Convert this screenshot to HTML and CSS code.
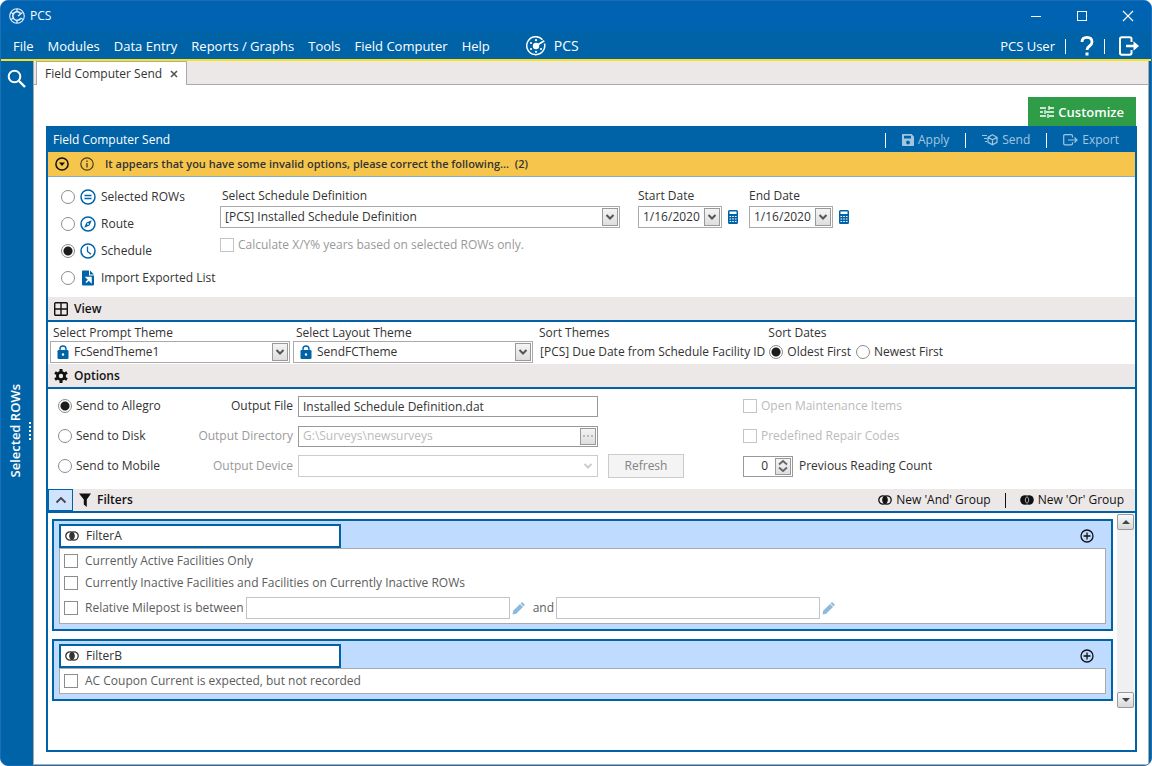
FILE: index.html
```html
<!DOCTYPE html>
<html lang="en">
<head>
    <meta charset="UTF-8">
    <meta name="viewport" content="width=device-width, initial-scale=1.0">
    <title>PCS</title>
    <link rel="stylesheet" href="styles.css">
</head>
<body>
    <svg class="sprite" aria-hidden="true">
        <symbol id="chevron-down" viewBox="0 0 10 8"><path d="M1.5 2L5 5.5 8.5 2" fill="none" stroke="currentColor" stroke-width="2"/></symbol>
        <symbol id="calc" viewBox="0 0 12 14"><rect x="1" width="10" height="14" rx="1.5" fill="#0063a7"/><path d="M2.5 1.5h7V4h-7z" fill="#fff"/><path d="M2.5 6.5h7M2.5 9h7M2.5 11.5h7" stroke="#fff" stroke-width="1.2" stroke-dasharray="1.6 1.1"/></symbol>
        <symbol id="lock" viewBox="0 0 12 14"><rect x="0.5" y="5" width="11" height="9" rx="1.2" fill="#0063a7"/><path d="M3 5.5V4a3 3 0 0 1 6 0v1.5" fill="none" stroke="#0063a7" stroke-width="1.4"/><circle cx="6" cy="9.5" r="1.2" fill="#fff"/></symbol>
        <symbol id="and" viewBox="0 0 14 10"><circle cx="5" cy="5" r="4.2" fill="none" stroke="currentColor" stroke-width="1.3"/><circle cx="9" cy="5" r="4.2" fill="none" stroke="currentColor" stroke-width="1.3"/><path d="M7 1.3a4.2 4.2 0 0 1 0 7.400a4.2 4.2 0 0 1 0-7.400z" fill="currentColor"/></symbol>
        <symbol id="or" viewBox="0 0 14 10"><circle cx="5" cy="5" r="4.8" fill="currentColor"/><circle cx="9" cy="5" r="4.8" fill="currentColor"/><path d="M7 1.6a4.2 4.2 0 0 1 0 6.8a4.2 4.2 0 0 1 0-6.8z" fill="none" stroke="#ece8e8" stroke-width="0.7"/></symbol>
        <symbol id="plus" viewBox="0 0 14 14"><circle cx="7" cy="7" r="6" fill="none" stroke="#111" stroke-width="1.3"/><path d="M7 3.5v7M3.5 7h7" stroke="#111" stroke-width="1.3"/></symbol>
        <symbol id="pencil" viewBox="0 0 13 13"><path d="M0.5 12.5l0.7-3.7L8 2l3 3-6.800 6.800zM8.600 1.400l0.800-.8q.7-.6 1.300 0l1.700 1.700q.6.600 0 1.300l-.8.800z" fill="#8cb9dc"/></symbol>
        <symbol id="exit" viewBox="0 0 20 20"><path d="M12.5 6V3q0-1.800-1.800-1.800H2.800Q1 1.200 1 3v14q0 1.800 1.800 1.800h7.900q1.800 0 1.800-1.800v-3" fill="none" stroke="currentColor" stroke-width="2"/><path d="M7 10h9" stroke="currentColor" stroke-width="2.4"/><path d="M14.5 5.2L20 10l-5.5 4.800z" fill="currentColor"/></symbol>
    </svg>

    <div class="window">
        <header class="title-bar">
            <svg class="title-logo" viewBox="0 0 16 16"><circle cx="8" cy="8" r="7.300" fill="none" stroke="#e3eef8" stroke-width="1.1"/><path d="M11.600 10.500A4.300 4.300 0 1 1 11.500 5.400" fill="none" stroke="#e3eef8" stroke-width="1.600"/><path d="M8 1v3M8 12v3M2 4.500l2.500 1.500M2 11.500L4.500 10M14 11.500L11.500 10M9 8l4.500-3.500" stroke="#e3eef8" stroke-width="1.4"/></svg>
            <span class="grow">PCS</span>
            <button class="window-button" aria-label="Minimize"><svg viewBox="0 0 12 12"><path d="M1 6.5h10" stroke="#fff"/></svg></button>
            <button class="window-button" aria-label="Maximize"><svg viewBox="0 0 12 12"><rect x="1.5" y="1.5" width="9" height="9" fill="none" stroke="#fff"/></svg></button>
            <button class="window-button" aria-label="Close"><svg viewBox="0 0 12 12"><path d="M1 1l10 10M11 1L1 11" stroke="#fff" stroke-width="1.2"/></svg></button>
        </header>

        <nav class="menu-bar">
            <a href="#">File</a>
            <a href="#">Modules</a>
            <a href="#">Data Entry</a>
            <a href="#">Reports / Graphs</a>
            <a href="#">Tools</a>
            <a href="#">Field Computer</a>
            <a href="#">Help</a>
            <a href="#" class="brand">
                <svg width="20" height="20" viewBox="0 0 20 20"><path d="M18.500 7.500A9 9 0 1 1 16.500 3.700" fill="none" stroke="#fff" stroke-width="1.5"/><circle cx="10" cy="10" r="3.2" fill="#fff"/><path d="M11 9.300L18.300 4.800" stroke="#fff" stroke-width="1.7"/><g fill="#fff"><circle cx="10" cy="4.200" r="1.1"/><circle cx="5" cy="7" r="1.1"/><circle cx="5" cy="13" r="1.1"/><circle cx="10" cy="15.800" r="1.1"/><circle cx="15" cy="13" r="1.1"/></g></svg>
                PCS
            </a>
            <span class="grow"></span>
            <a href="#">PCS User</a>
            <span class="divider"></span>
            <button class="menu-icon" aria-label="Help"><svg width="14" height="20" viewBox="0 0 14 20"><path d="M2 6q0-4.600 5-4.600T12 6q0 2.200-2.500 4T7 14" fill="none" stroke="#fff" stroke-width="2.800"/><rect x="5.500" y="16.500" width="3" height="3" fill="#fff"/></svg></button>
            <span class="divider"></span>
            <button class="menu-icon" aria-label="Sign out"><svg width="20" height="20"><use href="#exit"/></svg></button>
        </nav>

        <div class="workspace">
            <aside class="sidebar">
                <button class="search" aria-label="Search"><svg width="20" height="20" viewBox="0 0 20 20"><circle cx="7.500" cy="7.500" r="5.800" fill="none" stroke="#fff" stroke-width="2"/><path d="M12 12l6 6" stroke="#fff" stroke-width="2.4"/></svg></button>
                <div class="side-tab"><span>Selected ROWs</span><i class="grip"></i></div>
            </aside>

            <div class="content">
                <div class="tabs">
                    <div class="tab">Field Computer Send
                        <button class="tab-close" aria-label="Close tab"><svg width="8" height="8" viewBox="0 0 8 8"><path d="M1 1l6 6M7 1L1 7" stroke="#555" stroke-width="1.6"/></svg></button>
                    </div>
                </div>

                <main class="page">
                    <button class="customize"><svg width="14" height="12" viewBox="0 0 14 12"><path d="M0 2h6M9 2h5M9 0v4M0 6h3M6 6h8M5 4v4M0 10h6M9 10h5M8 8v4" stroke="#fff" stroke-width="1.3"/></svg>Customize</button>

                    <section class="panel">
                        <div class="panel-header">
                            <h1>Field Computer Send</h1>
                            <span class="divider"></span>
                            <button disabled><svg width="12" height="12" viewBox="0 0 12 12"><path d="M1 0h8.500L12 2.500V11q0 1-1 1H1q-1 0-1-1V1q0-1 1-1z" fill="currentColor"/><path d="M2 1.700h7V4.500H2z" fill="#0063a7"/><circle cx="6" cy="8.500" r="1.900" fill="#0063a7"/></svg>Apply</button>
                            <span class="divider"></span>
                            <button disabled><svg width="16" height="12" viewBox="0 0 16 12"><path d="M0 1.500h5M2 4.500h3M3 7.500h2" stroke="currentColor" stroke-width="1.2"/><path d="M10.500 0.800L15 3.300v5l-4.500 2.500L6 8.300v-5zM6 3.300l4.500 2.500L15 3.300M10.500 5.800v5" fill="none" stroke="currentColor" stroke-width="1.2"/></svg>Send</button>
                            <span class="divider"></span>
                            <button disabled><svg width="15" height="12" viewBox="0 0 15 12"><path d="M9.500 3.500V2q0-1.300-1.300-1.300H2Q.7.700.7 2v7.500q0 1.300 1.300 1.300h6.200q1.300 0 1.300-1.300V8.300M5 6h9M11.500 3.500L14 6l-2.500 2.500" fill="none" stroke="currentColor" stroke-width="1.2"/></svg>Export</button>
                        </div>

                        <div class="warning">
                            <svg width="14" height="14" viewBox="0 0 14 14"><circle cx="7" cy="7" r="6.100" fill="none" stroke="#111" stroke-width="1.5"/><path d="M4 5.500h6L7 9z" fill="#111"/></svg>
                            <svg width="14" height="14" viewBox="0 0 14 14"><circle cx="7" cy="7" r="6.200" fill="none" stroke="#4a3d1a" stroke-width="1.2"/><path d="M7 6v4.500M7 3.500v1.400" stroke="#4a3d1a" stroke-width="1.3"/></svg>
                            <strong>It appears that you have some invalid options, please correct the following... &nbsp;(2)</strong>
                        </div>

                        <div class="source">
                            <div class="source-list">
                                <label><input type="radio" name="source"><svg width="16" height="16" viewBox="0 0 16 16"><circle cx="8" cy="8" r="7" fill="none" stroke="#0063a7" stroke-width="1.5"/><path d="M4.500 6.500h7M4.500 9.500h7" stroke="#0063a7" stroke-width="1.4"/></svg>Selected ROWs</label>
                                <label><input type="radio" name="source"><svg width="16" height="16" viewBox="0 0 16 16"><circle cx="8" cy="8" r="7" fill="none" stroke="#0063a7" stroke-width="1.5"/><path d="M11.800 4.200L9.500 9.500l-5.300 2.300 2.300-5.300z" fill="#0063a7"/><circle cx="8" cy="8" r="0.900" fill="#fff"/></svg>Route</label>
                                <label><input type="radio" name="source" checked><svg width="16" height="16" viewBox="0 0 16 16"><circle cx="8" cy="8" r="7" fill="none" stroke="#0063a7" stroke-width="1.5"/><path d="M7.500 3.500v5l3.500 2.800" fill="none" stroke="#0063a7" stroke-width="1.3"/></svg>Schedule</label>
                                <label><input type="radio" name="source"><svg width="16" height="16" viewBox="0 0 16 16"><path d="M3 0.500h6v5h5v9q0 1-1 1H3q-1 0-1-1v-13q0-1 1-1zM10 .5l4 4h-4z" fill="#0063a7"/><path d="M6.500 7.500H11V12zM9 9.500L6 12.500" fill="#fff" stroke="#fff" stroke-width="1.5"/></svg>Import Exported List</label>
                            </div>

                            <div class="schedule">
                                <label class="caption" for="definition">Select Schedule Definition</label>
                                <div class="select">
                                    <select id="definition"><option>[PCS] Installed Schedule Definition</option></select>
                                    <span class="arrow"><svg width="10" height="8"><use href="#chevron-down"/></svg></span>
                                </div>
                                <label class="check muted"><input type="checkbox" disabled>Calculate X/Y% years based on selected ROWs only.</label>
                            </div>

                            <div class="dates">
                                <label class="caption" for="start">Start Date</label>
                                <div class="date-row">
                                    <div class="date-box"><input type="text" id="start" value="1/16/2020"><button class="drop" aria-label="Pick start date"><svg width="10" height="8"><use href="#chevron-down"/></svg></button></div>
                                    <svg width="12" height="14"><use href="#calc"/></svg>
                                </div>
                            </div>
                            <div class="dates">
                                <label class="caption" for="end">End Date</label>
                                <div class="date-row">
                                    <div class="date-box"><input type="text" id="end" value="1/16/2020"><button class="drop" aria-label="Pick end date"><svg width="10" height="8"><use href="#chevron-down"/></svg></button></div>
                                    <svg width="12" height="14"><use href="#calc"/></svg>
                                </div>
                            </div>
                        </div>

                        <div class="section-header">
                            <svg width="14" height="14" viewBox="0 0 14 14"><rect x="0.700" y="0.700" width="12.600" height="12.600" rx="1" fill="none" stroke="#111" stroke-width="1.4"/><path d="M7 1v12M1 7h12" stroke="#111" stroke-width="1.4"/></svg>
                            <h2>View</h2>
                        </div>
                        <div class="view">
                            <div class="theme">
                                <label for="prompt">Select Prompt Theme</label>
                                <div class="select with-lock">
                                    <svg class="lock" width="12" height="14"><use href="#lock"/></svg>
                                    <select id="prompt"><option>FcSendTheme1</option></select>
                                    <span class="arrow"><svg width="10" height="8"><use href="#chevron-down"/></svg></span>
                                </div>
                            </div>
                            <div class="theme">
                                <label for="layout">Select Layout Theme</label>
                                <div class="select with-lock">
                                    <svg class="lock" width="12" height="14"><use href="#lock"/></svg>
                                    <select id="layout"><option>SendFCTheme</option></select>
                                    <span class="arrow"><svg width="10" height="8"><use href="#chevron-down"/></svg></span>
                                </div>
                            </div>
                            <div class="sort">
                                <span>Sort Themes</span>
                                <span class="sort-value">[PCS] Due Date from Schedule Facility ID</span>
                            </div>
                            <div class="sort">
                                <span>Sort Dates</span>
                                <div class="sort-value">
                                    <label><input type="radio" name="order" checked>Oldest First</label>
                                    <label><input type="radio" name="order">Newest First</label>
                                </div>
                            </div>
                        </div>

                        <div class="section-header">
                            <svg width="14" height="14" viewBox="0 0 14 14"><circle cx="7" cy="7" r="3.600" fill="none" stroke="#111" stroke-width="2.800"/><path d="M7 0v2.500M7 11.500V14M1 3.500l2.200 1.300M10.800 9.200l2.200 1.300M1 10.500l2.200-1.300M10.800 4.800L13 3.500" stroke="#111" stroke-width="3"/></svg>
                            <h2>Options</h2>
                        </div>
                        <div class="options">
                            <label><input type="radio" name="target" checked>Send to Allegro</label>
                            <label class="field-label" for="file">Output File</label>
                            <input type="text" class="text-box" id="file" value="Installed Schedule Definition.dat">
                            <span></span>
                            <label class="check disabled"><input type="checkbox" disabled>Open Maintenance Items</label>

                            <label><input type="radio" name="target">Send to Disk</label>
                            <label class="field-label muted" for="directory">Output Directory</label>
                            <div class="text-box browse"><input type="text" id="directory" value="G:\Surveys\newsurveys" disabled><button class="drop" aria-label="Browse" disabled><svg width="10" height="2" viewBox="0 0 10 2"><path d="M0 1h2M4 1h2M8 1h2" stroke="#bbb" stroke-width="2"/></svg></button></div>
                            <span></span>
                            <label class="check disabled"><input type="checkbox" disabled>Predefined Repair Codes</label>

                            <label><input type="radio" name="target">Send to Mobile</label>
                            <label class="field-label muted" for="device">Output Device</label>
                            <div class="select off">
                                <select id="device" disabled><option></option></select>
                                <span class="arrow"><svg width="10" height="8"><use href="#chevron-down"/></svg></span>
                            </div>
                            <button class="refresh" disabled>Refresh</button>
                            <div class="reading">
                                <div class="spinner"><input type="text" id="count" value="0"><button class="drop" aria-label="Change count"><svg width="12" height="14" viewBox="0 0 12 14"><path d="M2 5.500L6 2l4 3.500M2 8.500L6 12l4-3.500" fill="none" stroke="#666" stroke-width="1.8"/></svg></button></div>
                                <label for="count">Previous Reading Count</label>
                            </div>
                        </div>

                        <div class="section-header filters-header">
                            <button class="collapse" aria-label="Collapse filters"><svg width="12" height="8" viewBox="0 0 12 8"><path d="M1.500 6.500L6 2l4.500 4.500" fill="none" stroke="#444" stroke-width="1.8"/></svg></button>
                            <svg width="12" height="14" viewBox="0 0 12 14"><path d="M0 0.500h12L7.800 6.500V14L4.800 11.500V6.500z" fill="#111"/></svg>
                            <h2>Filters</h2>
                            <button class="group-button"><svg width="14" height="10"><use href="#and"/></svg>New 'And' Group</button>
                            <span class="divider"></span>
                            <button class="group-button"><svg width="14" height="10"><use href="#or"/></svg>New 'Or' Group</button>
                        </div>
                        <div class="filters">
                            <div class="groups">
                                <div class="group">
                                    <div class="group-head">
                                        <div class="group-name"><svg width="14" height="10"><use href="#and"/></svg><input type="text" value="FilterA" aria-label="Filter name"></div>
                                        <button class="add" aria-label="Add filter"><svg width="14" height="14"><use href="#plus"/></svg></button>
                                    </div>
                                    <div class="group-body">
                                        <label class="check"><input type="checkbox">Currently Active Facilities Only</label>
                                        <label class="check"><input type="checkbox">Currently Inactive Facilities and Facilities on Currently Inactive ROWs</label>
                                        <div class="range">
                                            <label class="check"><input type="checkbox">Relative Milepost is between</label>
                                            <input type="text" class="range-box" aria-label="From milepost">
                                            <svg width="13" height="13"><use href="#pencil"/></svg>
                                            <span class="range-and">and</span>
                                            <input type="text" class="range-box" aria-label="To milepost">
                                            <svg width="13" height="13"><use href="#pencil"/></svg>
                                        </div>
                                    </div>
                                </div>
                                <div class="group">
                                    <div class="group-head">
                                        <div class="group-name"><svg width="14" height="10"><use href="#and"/></svg><input type="text" value="FilterB" aria-label="Filter name"></div>
                                        <button class="add" aria-label="Add filter"><svg width="14" height="14"><use href="#plus"/></svg></button>
                                    </div>
                                    <div class="group-body">
                                        <label class="check"><input type="checkbox">AC Coupon Current is expected, but not recorded</label>
                                    </div>
                                </div>
                            </div>
                            <div class="scrollbar">
                                <button aria-label="Scroll up"><svg width="8" height="4" viewBox="0 0 8 4"><path d="M0 4l4-4 4 4z" fill="#444"/></svg></button>
                                <button aria-label="Scroll down"><svg width="8" height="4" viewBox="0 0 8 4"><path d="M0 0l4 4 4-4z" fill="#444"/></svg></button>
                            </div>
                        </div>
                    </section>
                </main>
            </div>
        </div>
    </div>
</body>
</html>
```

FILE: styles.css
```css
* {
    box-sizing: border-box;
}

body {
    margin: 0;
    background-color: white;
    font-family: "Open Sans", "Noto Sans", sans-serif;
    font-size: 12px;
    line-height: 16px;
    color: #333;
}

button, input, select {
    font: inherit;
    color: inherit;
    margin: 0;
    padding: 0;
    border: none;
    background: none;
    border-radius: 0;
}

svg {
    display: block;
    flex: none;
}

h1, h2 {
    margin: 0;
    font-size: 12px;
}

a {
    color: inherit;
    text-decoration: none;
}

label {
    white-space: nowrap;
}

.sprite {
    position: absolute;
    width: 0;
    height: 0;
}

.grow {
    flex: 1;
}

.window {
    display: flex;
    flex-direction: column;
    min-height: 100vh;
    border: 1px solid #1a6fb8;
    border-radius: 8px;
    overflow: hidden;
    background-color: #0063a7;
}

/* title bar and menu */
.title-bar {
    display: flex;
    align-items: center;
    height: 30px;
    padding-left: 8px;
    background-color: #0063b1;
    color: white;
}

.title-logo {
    width: 16px;
    height: 16px;
    margin-right: 5px;
}

.window-button {
    display: flex;
    align-items: center;
    justify-content: center;
    width: 46px;
    height: 30px;
}

.window-button svg {
    width: 12px;
    height: 12px;
}

.menu-bar {
    display: flex;
    align-items: center;
    gap: 14px;
    height: 30px;
    padding: 2px 12px 0;
    border-bottom: 2px solid #ffe11a;
    color: white;
    font-size: 13px;
    white-space: nowrap;
}

.brand {
    display: flex;
    align-items: center;
    gap: 8px;
    margin-left: 22px;
    font-size: 14px;
}

.divider {
    width: 1px;
    height: 15px;
    background-color: currentColor;
}

.menu-bar .divider {
    margin-left: -4px;
}

/* sidebar */
.workspace {
    display: flex;
    flex: 1;
    padding-right: 2px;
}

.sidebar {
    display: flex;
    flex-direction: column;
    width: 32px;
    color: white;
}

.search {
    padding: 8px 6px;
}

.side-tab {
    display: flex;
    flex: 1;
    align-items: center;
    justify-content: flex-end;
    gap: 6px;
    padding-right: 2px;
    font-size: 13px;
    font-weight: 600;
}

.side-tab span {
    writing-mode: vertical-rl;
    transform: rotate(180deg);
}

.grip {
    height: 18px;
    border-left: 2px dotted white;
}

.content {
    display: flex;
    flex: 1;
    flex-direction: column;
    min-width: 0;
    border: 1px solid #aaa;
    border-top: none;
    background-color: white;
}

/* tabs */
.tabs {
    display: flex;
    height: 24px;
    padding-left: 2px;
    background-color: #ece8e8;
    box-shadow: inset 0 -1px #aaa;
}

.tab {
    display: flex;
    align-items: center;
    gap: 8px;
    padding: 0 8px;
    border: 1px solid #aaa;
    border-bottom: none;
    background-color: white;
}

.page {
    display: flex;
    flex: 1;
    flex-direction: column;
    padding: 12px 11px 12px 12px;
}

.customize {
    display: flex;
    align-items: center;
    align-self: flex-end;
    gap: 4px;
    height: 29px;
    margin-right: 1px;
    padding: 0 12px;
    background-color: #2f9c48;
    color: white;
    font-size: 13px;
    font-weight: 600;
}

/* main panel */
.panel {
    flex: 1;
    border: 2px solid #0063a7;
    border-top: none;
}

.panel-header {
    display: flex;
    align-items: center;
    gap: 16px;
    height: 26px;
    padding: 2px 16px 0 5px;
    background-color: #0063a7;
    color: white;
}

.panel-header h1 {
    flex: 1;
    font-weight: 400;
}

.panel-header button {
    display: flex;
    align-items: center;
    gap: 4px;
    color: #a3c6e0;
}

.warning {
    display: flex;
    align-items: center;
    gap: 11px;
    height: 25px;
    padding-left: 7px;
    border-bottom: 1px solid #84afc9;
    background-color: #f6c64c;
    font-size: 11px;
}

.warning strong {
    font-weight: 600;
}

/* form controls */
input[type="radio"] {
    appearance: none;
    flex: none;
    width: 14px;
    height: 14px;
    border: 1px solid #8c8c8c;
    border-radius: 50%;
    background-color: white;
}

input[type="radio"]:checked {
    background-image: radial-gradient(circle, #1c1c1c 4px, white 5px);
}

input[type="checkbox"] {
    appearance: none;
    flex: none;
    width: 14px;
    height: 14px;
    border: 1px solid #8c8c8c;
    background-color: white;
}

input[type="checkbox"]:disabled {
    border-color: #c4c4c4;
}

.check {
    display: flex;
    align-items: center;
    gap: 4px;
}

.muted {
    color: #999;
}

.disabled {
    color: #bbb;
}

.select {
    position: relative;
    height: 22px;
    border: 1px solid #aaa;
    background-color: white;
}

.select select {
    appearance: none;
    width: 100%;
    height: 20px;
    padding: 0 22px 0 4px;
}

.select.with-lock select {
    padding-left: 23px;
}

.lock {
    position: absolute;
    left: 6px;
    top: 3px;
}

.drop, .arrow {
    display: flex;
    align-items: center;
    justify-content: center;
    width: 16px;
    height: 18px;
    border: 1px solid #999;
    background: linear-gradient(#f4f4f4, #dedede);
    color: #555;
}

.arrow {
    position: absolute;
    right: 1px;
    top: 1px;
    pointer-events: none;
}

.off {
    border-color: #ccc;
}

.off .arrow {
    border: none;
    background: none;
    color: #ccc;
}

/* source */
.source {
    display: flex;
    padding: 6px 0;
}

.source-list {
    width: 172px;
    padding-left: 13px;
}

.source-list label {
    display: flex;
    align-items: center;
    gap: 5px;
    height: 27px;
}

.schedule {
    width: 400px;
    margin-right: 18px;
}

.caption {
    display: block;
    padding: 5px 0 2px 2px;
}

.schedule .check {
    margin-top: 9px;
}

.dates {
    width: 111px;
}

.dates .caption {
    padding-left: 0;
}

.date-row {
    display: flex;
    align-items: center;
    gap: 5px;
}

.date-box {
    display: flex;
    align-items: center;
    width: 84px;
    height: 22px;
    padding-right: 1px;
    border: 1px solid #aaa;
}

.date-box input {
    flex: 1;
    min-width: 0;
    padding-left: 4px;
}

/* section headers */
.section-header {
    display: flex;
    align-items: center;
    gap: 6px;
    height: 25px;
    padding-left: 6px;
    border-bottom: 2px solid #0063a7;
    background-color: #ece8e8;
    color: #111;
}

.section-header h2 {
    font-weight: 600;
}

/* view */
.view {
    display: flex;
    height: 42px;
    padding: 3px 0 0 2px;
}

.theme {
    width: 240px;
    margin-right: 3px;
}

.theme label {
    display: block;
    padding-left: 3px;
}

.sort {
    margin-left: 3px;
    white-space: nowrap;
}

.sort-value {
    display: flex;
    gap: 5px;
    padding: 3px 0 0 1px;
}

.sort-value label, .options label {
    display: flex;
    align-items: center;
    gap: 4px;
}

/* options */
.options {
    display: grid;
    grid-template-columns: 120px 110px 300px 135px 1fr;
    grid-auto-rows: 30px;
    column-gap: 5px;
    align-items: center;
    padding: 2px 0 8px 10px;
}

.options .field-label {
    justify-content: flex-end;
}

.text-box {
    height: 21px;
    padding: 0 4px;
    border: 1px solid #999;
}

.browse {
    display: flex;
    align-items: center;
    padding-right: 1px;
    color: #bbb;
}

.browse input {
    flex: 1;
}

.browse .drop {
    height: 17px;
}

.refresh {
    width: 76px;
    height: 24px;
    margin-left: 5px;
    border: 1px solid #ccc;
    background-color: #f4f4f4;
    color: #838383;
}

.reading {
    display: flex;
    align-items: center;
    gap: 6px;
}

.spinner {
    display: flex;
    align-items: center;
    width: 50px;
    height: 21px;
    padding-right: 1px;
    border: 1px solid #999;
}

.spinner input {
    flex: 1;
    min-width: 0;
    padding-right: 7px;
    text-align: right;
}

.spinner .drop {
    height: 17px;
}

/* filters */
.filters-header {
    height: 24px;
    padding: 0 11px 0 0;
}

.filters-header h2 {
    flex: 1;
}

.collapse {
    display: flex;
    align-items: center;
    justify-content: center;
    width: 25px;
    height: 22px;
    border: 1px solid #0063a7;
    background-color: #cfe3ff;
}

.group-button {
    display: flex;
    align-items: center;
    gap: 4px;
}

.filters-header .divider {
    margin: 0 8px;
}

.filters {
    display: flex;
    gap: 4px;
    padding: 1px 1px 0 4px;
}

.groups {
    display: flex;
    flex: 1;
    flex-direction: column;
    gap: 8px;
    padding: 5px 0 7px;
}

.group {
    padding: 3px 5px 5px;
    border: 2px solid #0063a7;
    background-color: #bfdbff;
}

.group-head {
    display: flex;
    align-items: center;
    justify-content: space-between;
    padding-right: 12px;
}

.group-name {
    display: flex;
    align-items: center;
    gap: 7px;
    width: 282px;
    height: 24px;
    padding-left: 4px;
    border: 2px solid #0063a7;
    background-color: white;
}

.group-body {
    padding: 1px 4px;
    border: 1px solid #aaa;
    background-color: white;
    color: #5c5c5c;
}

.group-body .check {
    gap: 7px;
    height: 22px;
}

.range {
    display: flex;
    align-items: center;
    gap: 2px;
    height: 28px;
}

.range-box {
    width: 264px;
    height: 22px;
    border: 1px solid #c4c4c4;
}

.range-and {
    margin-left: 6px;
}

.scrollbar {
    display: flex;
    flex-direction: column;
    justify-content: space-between;
    width: 17px;
    background-color: #f0f0f0;
}

.scrollbar button {
    display: flex;
    align-items: center;
    justify-content: center;
    height: 16px;
    border: 1px solid #999;
    border-radius: 2px;
    background: linear-gradient(#fafafa, #d8d8d8);
}
```
